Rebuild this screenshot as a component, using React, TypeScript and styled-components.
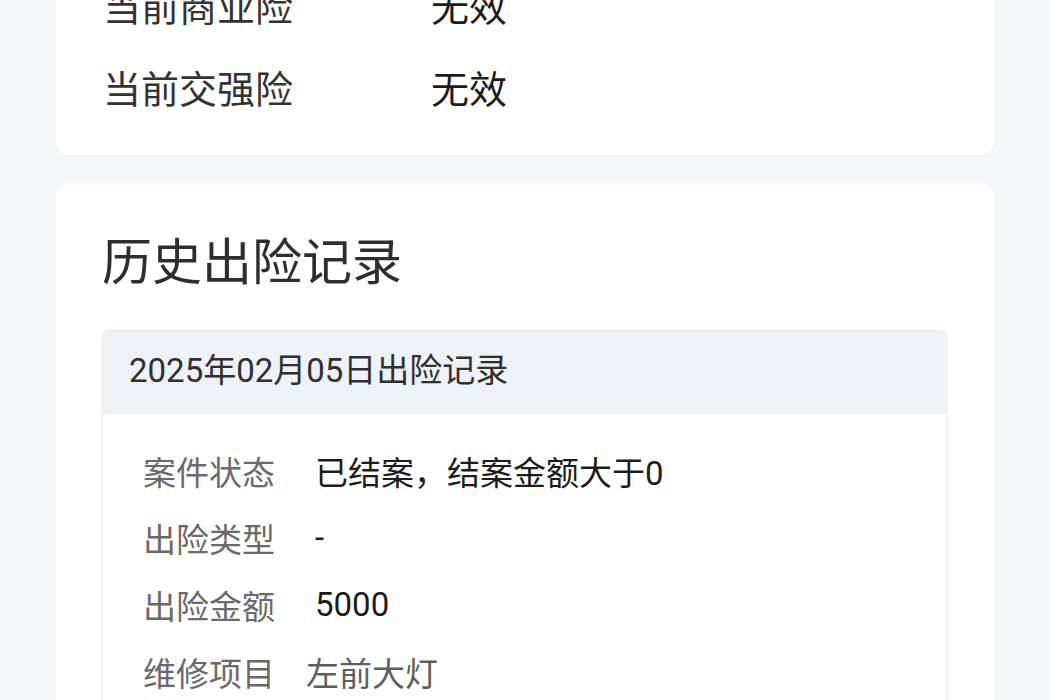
import React from "react";
import styled, { createGlobalStyle } from "styled-components";

const GlobalStyle = createGlobalStyle`
  html, body {
    margin: 0;
    padding: 0;
    background: #f4f6f9;
    font-family: "Roboto", "Noto Sans CJK SC", sans-serif;
  }
`;

const Viewport = styled.div`
  width: 1050px;
  height: 700px;
  overflow: hidden;
  background: #f4f6f9;
`;

const Page = styled.div`
  margin-top: -61px;
  padding: 0 56px;
  display: flex;
  flex-direction: column;
  gap: 28px;
`;

const Card = styled.section<{ padTop: number; padBottom: number }>`
  background: #ffffff;
  border-radius: 14px;
  padding: ${props => props.padTop}px 46px ${props => props.padBottom}px 47px;
`;

const InfoRow = styled.div`
  display: flex;
  align-items: center;
  height: 82px;
  font-size: 38px;
`;

const InfoLabel = styled.span`
  width: 328px;
  color: #333333;
`;

const InfoValue = styled.span`
  color: #1c1c1c;
`;

const Title = styled.h2`
  margin: 0 0 36px -1px;
  font-size: 50px;
  font-weight: 400;
  line-height: 60px;
  color: #2e2e2e;
`;

const Record = styled.div`
  margin-left: -2px;
  border-radius: 10px 10px 0 0;
  overflow: hidden;
`;

const RecordHeader = styled.div`
  height: 85px;
  box-sizing: border-box;
  display: flex;
  align-items: center;
  padding: 0 0 8px 28px;
  background: #eef1f6;
  font-size: 33px;
  color: #2f2f2f;
`;

const RecordBody = styled.div`
  border: 2px solid #eff0f2;
  border-top: none;
  padding: 23px 40px 40px 40px;
  min-height: 400px;
`;

const DetailRow = styled.div`
  display: flex;
  align-items: center;
  height: 67px;
  font-size: 33px;
`;

const DetailLabel = styled.span`
  width: 132px;
  color: #6a6a6a;
`;

const DetailValue = styled.span<{ muted?: boolean }>`
  margin-left: ${props => (props.muted ? 31 : 40)}px;
  color: ${props => (props.muted ? "#5e5e5e" : "#1c1c1c")};
`;

const policies = [
  { label: "当前商业险", value: "无效" },
  { label: "当前交强险", value: "无效" }
];

const details = [
  { label: "案件状态", value: "已结案，结案金额大于0" },
  { label: "出险类型", value: "-" },
  { label: "出险金额", value: "5000" },
  { label: "维修项目", value: "左前大灯", muted: true }
];

const App = () => (
  <>
    <GlobalStyle />
    <Viewport>
      <Page>
        <Card padTop={24} padBottom={28}>
          {policies.map(p => (
            <InfoRow key={p.label}>
              <InfoLabel>{p.label}</InfoLabel>
              <InfoValue>{p.value}</InfoValue>
            </InfoRow>
          ))}
        </Card>
        <Card padTop={50} padBottom={24}>
          <Title>历史出险记录</Title>
          <Record>
            <RecordHeader>2025年02月05日出险记录</RecordHeader>
            <RecordBody>
              {details.map(d => (
                <DetailRow key={d.label}>
                  <DetailLabel>{d.label}</DetailLabel>
                  <DetailValue muted={d.muted}>{d.value}</DetailValue>
                </DetailRow>
              ))}
            </RecordBody>
          </Record>
        </Card>
      </Page>
    </Viewport>
  </>
);

export default App;
